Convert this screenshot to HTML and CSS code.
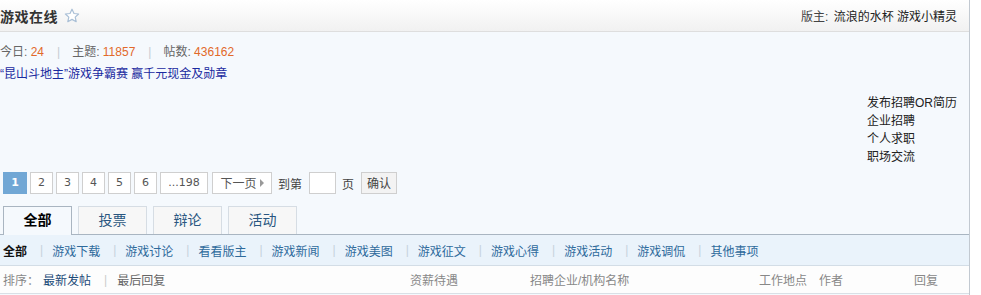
FILE: index.html
```html
<!DOCTYPE html>
<html lang="zh">
<head>
<meta charset="utf-8">
<link rel="stylesheet" href="styles.css">
</head>
<body>
<div class="wrap">
  <div class="hd">
    <div class="title">
      <span class="name">游戏在线</span>
      <svg class="star" width="16" height="16" viewBox="0 0 16 16"><path d="M8 1.2l2 4.3 4.6.5-3.4 3.1 1 4.6L8 11.4l-4.2 2.3 1-4.6L1.4 6l4.6-.5z" fill="#fff" stroke="#a9bfd6" stroke-width="1.2" stroke-linejoin="round"/></svg>
    </div>
    <div class="mods"><span class="lbl">版主:</span> 流浪的水杯 游戏小精灵</div>
  </div>
  <div class="bd">
    <div class="stats">
      <span>今日: <em>24</em></span><span class="sep">|</span>
      <span>主题: <em>11857</em></span><span class="sep">|</span>
      <span>帖数: <em>436162</em></span>
    </div>
    <div class="notice"><a>“昆山斗地主”游戏争霸赛 赢千元现金及勋章</a></div>
    <div class="side">
      <ul class="links">
        <li>发布招聘OR简历</li>
        <li>企业招聘</li>
        <li>个人求职</li>
        <li>职场交流</li>
      </ul>
    </div>
    <div class="pager">
      <span class="pg cur">1</span>
      <span class="pg">2</span>
      <span class="pg">3</span>
      <span class="pg">4</span>
      <span class="pg">5</span>
      <span class="pg">6</span>
      <span class="pg wide">...198</span>
      <span class="pg next">下一页<i class="arr"></i></span>
      <span class="txt">到第</span>
      <span class="inp"></span>
      <span class="txt">页</span>
      <span class="pg ok">确认</span>
    </div>
    <div class="tabs">
      <span class="tab on">全部</span>
      <span class="tab">投票</span>
      <span class="tab">辩论</span>
      <span class="tab">活动</span>
    </div>
    <div class="types">
      <span class="ty on">全部</span><span class="tsep">|</span>
      <span class="ty">游戏下载</span><span class="tsep">|</span>
      <span class="ty">游戏讨论</span><span class="tsep">|</span>
      <span class="ty">看看版主</span><span class="tsep">|</span>
      <span class="ty">游戏新闻</span><span class="tsep">|</span>
      <span class="ty">游戏美图</span><span class="tsep">|</span>
      <span class="ty">游戏征文</span><span class="tsep">|</span>
      <span class="ty">游戏心得</span><span class="tsep">|</span>
      <span class="ty">游戏活动</span><span class="tsep">|</span>
      <span class="ty">游戏调侃</span><span class="tsep">|</span>
      <span class="ty">其他事项</span>
    </div>
    <div class="sort">
      <div class="c-sort"><span class="lbl">排序：</span><span class="act">最新发帖</span><span class="ssep">|</span><span class="last">最后回复</span></div>
      <div class="c-pay">资薪待遇</div>
      <div class="c-org">招聘企业/机构名称</div>
      <div class="c-loc">工作地点</div>
      <div class="c-au">作者</div>
      <div class="c-re">回复</div>
    </div>
  </div>
</div>
</body>
</html>
```

FILE: styles.css
```css
* { box-sizing: border-box; }
html, body { margin: 0; padding: 0; background: #fff; }
body {
  font-family: "Liberation Sans", "Noto Sans CJK SC", sans-serif;
  font-size: 12px;
  color: #333;
}
.wrap {
  width: 970px;
  border-right: 1px solid #c2c9d1;
  height: 295px;
}
.hd {
  height: 32px;
  display: flex;
  align-items: center;
  justify-content: space-between;
  background: linear-gradient(#ffffff, #f1f1f1);
  border-bottom: 1px solid #dedede;
  padding: 0 12px 0 0;
}
.title { display: flex; align-items: center; gap: 6px; }
.name { font-size: 14px; font-weight: bold; color: #333; letter-spacing: 0.5px; }
.star { display: block; margin-top: 1px; }
.mods { color: #222; }
.mods .lbl { color: #444; margin-right: 2px; }
.bd {
  background: #f5f9fd;
  height: 263px;
  padding-top: 11px;
}
.stats { height: 18px; line-height: 18px; color: #666; display: flex; align-items: center; }
.stats em { font-style: normal; color: #e2692a; }
.stats .sep { color: #c5ccd3; margin: 0 12px 0 13px; }
.notice { height: 23px; line-height: 23px; margin-top: 2px; }
.notice a { color: #1a2aa0; text-decoration: none; }
.side { display: flex; justify-content: flex-end; margin-top: 8px; }
.links { list-style: none; margin: 0; padding: 0; width: 102px; color: #222; white-space: nowrap; }
.links li { height: 18px; line-height: 18px; }
.pager { display: flex; align-items: center; gap: 3px; margin-top: 6px; padding-left: 3px; height: 22px; }
.pg {
  height: 22px; line-height: 20px; width: 23px;
  border: 1px solid #cfcfcf; background: #fff; color: #555;
  text-align: center; padding: 0;
  font-family: "DejaVu Sans", "Noto Sans CJK SC", sans-serif; font-size: 11px;
}
.pg.cur { background: #71a7d5; border-color: #71a7d5; color: #fff; font-weight: bold; width: 24px; }
.pg.wide { width: 48px; }
.pg.next { width: 60px; margin-left: 1px; font-family: "Noto Sans CJK SC", sans-serif; font-size: 12px; display: flex; align-items: center; justify-content: center; gap: 3px; }
.arr { width: 0; height: 0; border-left: 4px solid #999; border-top: 4px solid transparent; border-bottom: 4px solid transparent; }
.txt { color: #444; margin: 0 4px 0 3px; }
.inp { width: 27px; height: 22px; border: 1px solid #cfcfcf; background: #fff; }
.pg.ok { background: #f3f3f3; font-family: "Noto Sans CJK SC", sans-serif; font-size: 12px; width: 36px; color: #444; }
.tabs { display: flex; gap: 6px; padding-left: 3px; margin-top: 12px; border-bottom: 1px solid #a9b5c1; height: 29px; align-items: flex-end; }
.tab {
  width: 69px; height: 28px; line-height: 27px; text-align: center;
  border: 1px solid #d6dde4; border-bottom: none; background: #f7f7f7;
  color: #2a5680; font-size: 14px;
}
.tab.on { background: #f5f9fd; border-color: #a9b5c1; color: #000; font-weight: bold; height: 29px; margin-bottom: -1px; }
.types {
  height: 31px; display: flex; align-items: center; padding-left: 3px;
  background: #eaf3fb; border-bottom: 1px solid #d3dde6;
}
.ty { color: #2e6a9b; }
.ty.on { color: #111; font-weight: bold; }
.tsep { color: #c6d2dc; margin: 0 9px 0 13px; }
.sort {
  height: 28px; display: flex; align-items: center; background: #fdfdfd;
  border-bottom: 1px solid #d9e0e6; color: #888;
}
.c-sort { width: 410px; padding-left: 3px; display: flex; align-items: center; }
.c-sort .lbl { color: #888; margin-right: 4px; }
.c-sort .act { color: #1b4a78; }
.c-sort .ssep { color: #ccc; margin: 0 10px 0 13px; }
.c-sort .last { color: #666; }
.c-pay { width: 120px; }
.c-org { width: 229px; }
.c-loc { width: 60px; }
.c-au { width: 95px; }
.c-re { width: 40px; }
```
